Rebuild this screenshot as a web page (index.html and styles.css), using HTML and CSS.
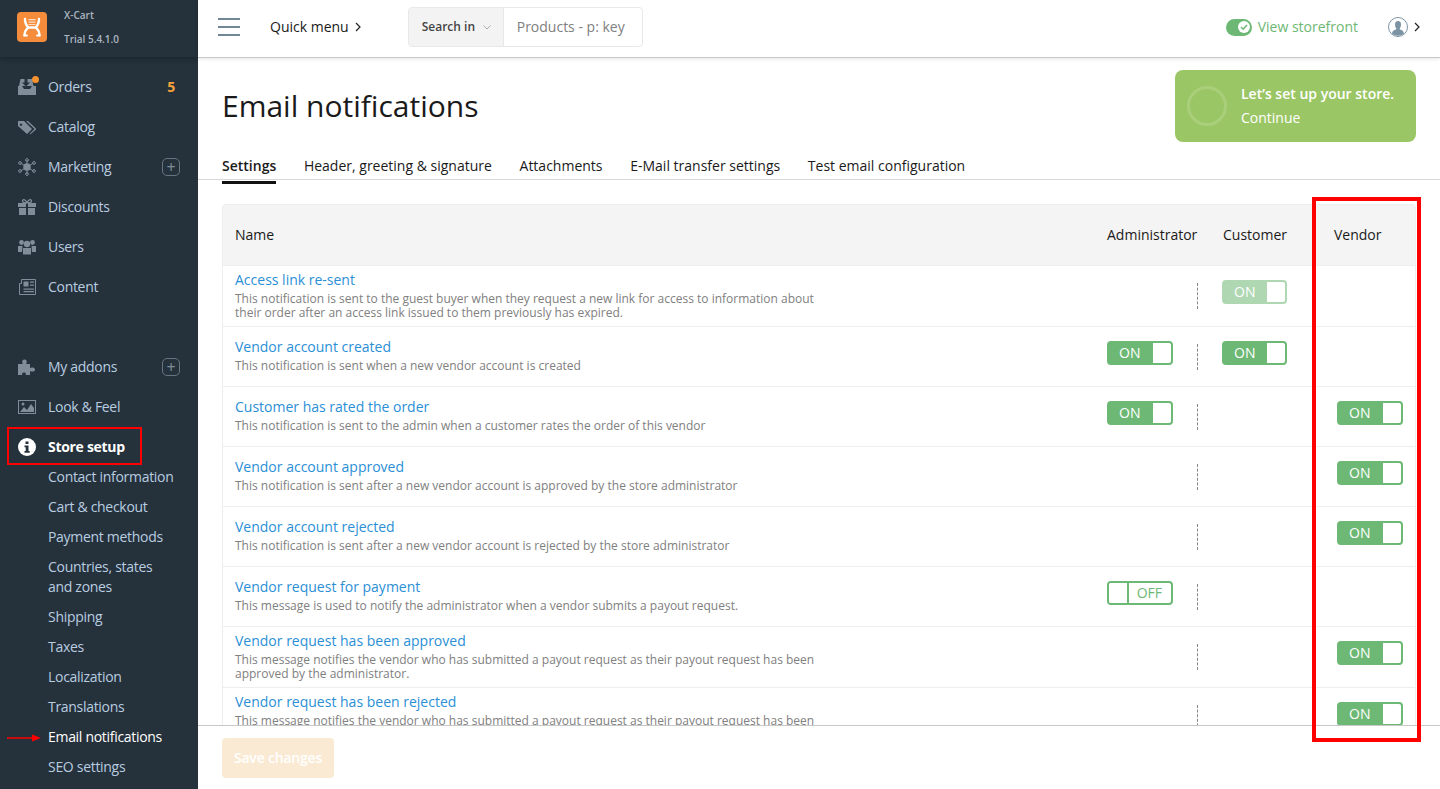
FILE: index.html
```html
<!DOCTYPE html>
<html lang="en">
<head>
<meta charset="utf-8">
<title>Email notifications</title>
<link rel="stylesheet" href="styles.css">
</head>
<body>
<div class="app">
  <aside class="sidebar">
    <div class="brand">
      <svg class="logo" viewBox="0 0 30 30"><rect width="30" height="30" rx="4" fill="#f58c3b"/><path d="M8 7c0 4 .5 6 3.500 8.500C8.500 18 8 19 7.500 23M22 7c0 4-.5 6-3.500 8.500 3 2.500 3.500 3.500 4 7.500M11 15.500h8" fill="none" stroke="#fff" stroke-width="2.400" stroke-linecap="round"/><path d="M7 23.500h3M20 23.500h3" stroke="#fff" stroke-width="1.800" stroke-linecap="round"/><path d="M11.500 7h7v1.300h-7zM11.500 9.500h7v1.300h-7zM11.500 12h7v1h-7z" fill="#fff" opacity=".7"/></svg>
      <div class="brand-text"><div>X-Cart</div><div>Trial 5.4.1.0</div></div>
    </div>
    <nav class="nav">
      <a class="item"><span class="ico"><svg viewBox="0 0 18 18"><path d="M2.500 1H14l1.500 7H18v9H0V8h1z" fill="#7f8e99"/><path d="M6.500 1h3v3.500h2.500L8 8.500 4 4.500h2.500zM4 8l2 3h6l2-3z" fill="#25313b"/></svg><i class="dot"></i></span>Orders<b class="count">5</b></a>
      <a class="item"><span class="ico"><svg viewBox="0 0 18 18"><path d="M0 3h6l8 8-5 5-9-8zM3 5.500a1.200 1.200 0 1 0 .01 0z" fill="#7f8e99" fill-rule="evenodd"/><path d="M8 3l8.500 8-5 5 1 .2 6-5.200L10 3z" fill="#7f8e99"/></svg></span>Catalog</a>
      <a class="item"><span class="ico"><svg viewBox="0 0 18 18"><g stroke="#7f8e99" fill="none"><path d="M9 9L2.500 5M9 9l6.500-4M9 9l-6.500 4M9 9l6.500 4M9 9V2M9 9v7"/><circle cx="9" cy="2" r="1.400"/><circle cx="9" cy="16" r="1.400"/><circle cx="2" cy="5" r="1.400"/><circle cx="16" cy="5" r="1.400"/><circle cx="2" cy="13" r="1.400"/><circle cx="16" cy="13" r="1.400"/></g><circle cx="9" cy="9" r="3.800" fill="#7f8e99"/></svg></span>Marketing<span class="plus">+</span></a>
      <a class="item"><span class="ico"><svg viewBox="0 0 18 18"><path d="M0 5h8v4H0zM10 5h8v4h-8zM1 10h7v7H1zM10 10h7v7h-7z" fill="#7f8e99"/><path d="M9 4.500C7 1 4.500 1 4.500 3S7 5 9 4.500C11 5 13.500 5 13.500 3S11 1 9 4.500z" fill="none" stroke="#7f8e99" stroke-width="1.300"/></svg></span>Discounts</a>
      <a class="item"><span class="ico"><svg viewBox="0 0 18 18"><g fill="#7f8e99"><circle cx="3.500" cy="4.500" r="2.400"/><circle cx="14.500" cy="4.500" r="2.400"/><circle cx="9" cy="6" r="3.200"/><path d="M0 8h4.500L4 14H0zM13.500 8H18v6h-4zM5 10h8v6.500H5z"/></g></svg></span>Users</a>
      <a class="item"><span class="ico"><svg viewBox="0 0 18 18"><path d="M3.500 1.500h14v15h-16V5.500h2z" fill="none" stroke="#7f8e99"/><path d="M5.500 3.500h5v5h-5zM12 3.500h4v1.300h-4zM12 6.500h4v1.300h-4zM5.500 10.500H16v1.300H5.500zM5.500 13H16v1.300H5.500z" fill="#7f8e99"/></svg></span>Content</a>
      <a class="item spaced"><span class="ico"><svg viewBox="0 0 18 18"><path d="M0 6h5C4 5 3.500 1.500 6.500 1.500S9 5 8 6h4v4c1-1 5-1 5 1.500S13.500 14 12 13v4H7.500c1-1 .5-2.500-1.500-2.500S3.500 16 4.500 17H0z" fill="#7f8e99"/></svg></span>My addons<span class="plus">+</span></a>
      <a class="item"><span class="ico"><svg viewBox="0 0 18 18"><rect x=".5" y="2.500" width="17" height="13" fill="none" stroke="#7f8e99"/><path d="M2 14l4-5 3 3 4-6 3 4v4z" fill="#7f8e99"/><circle cx="5" cy="6" r="1.500" fill="#7f8e99"/></svg></span>Look &amp; Feel</a>
      <a class="item current"><span class="ico"><svg viewBox="0 0 18 18"><circle cx="9" cy="9" r="9" fill="#fff"/><path d="M7.500 3.500h3v2.500h-3zM6.500 7.500h4V13h1.200v1.800H6.500V13h1.200V9.300H6.500z" fill="#25313b"/></svg></span>Store setup</a>
      <div class="sub">
        <a>Contact information</a>
        <a>Cart &amp; checkout</a>
        <a>Payment methods</a>
        <a class="wrap">Countries, states and zones</a>
        <a>Shipping</a>
        <a>Taxes</a>
        <a>Localization</a>
        <a>Translations</a>
        <a class="active">Email notifications</a>
        <a>SEO settings</a>
      </div>
    </nav>
  </aside>

  <div class="main">
    <header class="topbar">
      <div class="burger"><i></i><i></i><i></i></div>
      <div class="quick">Quick menu<svg class="chev" viewBox="0 0 6 10"><path d="M1 1l4 4-4 4" fill="none" stroke="#222" stroke-width="1.200"/></svg></div>
      <div class="search">
        <div class="search-in">Search in<svg viewBox="0 0 8 5"><path d="M.5.500L4 4 7.500.500" fill="none" stroke="#aaa"/></svg></div>
        <div class="search-ph">Products - p: key</div>
      </div>
      <div class="store">
        <span class="pill"><svg viewBox="0 0 12 12"><circle cx="6" cy="6" r="6" fill="#fff"/><path d="M3 6l2.200 2.200L9 4" fill="none" stroke="#6cb874" stroke-width="1.500"/></svg></span>
        View storefront
      </div>
      <div class="user">
        <svg class="avatar" viewBox="0 0 20 20"><circle cx="10" cy="10" r="9.500" fill="#fff" stroke="#7c93a3"/><path d="M10 4c2 0 3 1.500 3 3.500S12 11 11.500 12c1 1 4 1 4.500 4.500a9 9 0 0 1-12 0C4.500 13 7.500 13 8.500 12 8 11 7 9.500 7 7.500S8 4 10 4z" fill="#7c93a3"/></svg>
        <svg class="chev" viewBox="0 0 6 10"><path d="M1 1l4 4-4 4" fill="none" stroke="#222" stroke-width="1.200"/></svg>
      </div>
    </header>

    <div class="content">
      <div class="head">
        <h1>Email notifications</h1>
        <div class="setup">
          <span class="ring"></span>
          <div><b>Let’s set up your store.</b><div>Continue</div></div>
        </div>
      </div>
      <div class="tabs">
        <a class="tab on">Settings</a>
        <a class="tab">Header, greeting &amp; signature</a>
        <a class="tab">Attachments</a>
        <a class="tab">E-Mail transfer settings</a>
        <a class="tab">Test email configuration</a>
      </div>
      <div class="table">
        <div class="row thead">
          <div class="name">Name</div><div>Administrator</div><div class="th-cust">Customer</div><div class="th-vend">Vendor</div>
        </div>
        <div class="row tall">
          <div class="name"><a>Access link re-sent</a><p>This notification is sent to the guest buyer when they request a new link for access to information about their order after an access link issued to them previously has expired.</p></div>
          <div class="cell admin"></div>
          <div class="cell"><span class="toggle narrow dim">ON<i></i></span></div>
          <div class="cell vendor"></div>
        </div>
        <div class="row">
          <div class="name"><a>Vendor account created</a><p>This notification is sent when a new vendor account is created</p></div>
          <div class="cell admin"><span class="toggle">ON<i></i></span></div>
          <div class="cell"><span class="toggle narrow">ON<i></i></span></div>
          <div class="cell vendor"></div>
        </div>
        <div class="row">
          <div class="name"><a>Customer has rated the order</a><p>This notification is sent to the admin when a customer rates the order of this vendor</p></div>
          <div class="cell admin"><span class="toggle">ON<i></i></span></div>
          <div class="cell"></div>
          <div class="cell vendor"><span class="toggle">ON<i></i></span></div>
        </div>
        <div class="row">
          <div class="name"><a>Vendor account approved</a><p>This notification is sent after a new vendor account is approved by the store administrator</p></div>
          <div class="cell admin"></div>
          <div class="cell"></div>
          <div class="cell vendor"><span class="toggle">ON<i></i></span></div>
        </div>
        <div class="row">
          <div class="name"><a>Vendor account rejected</a><p>This notification is sent after a new vendor account is rejected by the store administrator</p></div>
          <div class="cell admin"></div>
          <div class="cell"></div>
          <div class="cell vendor"><span class="toggle">ON<i></i></span></div>
        </div>
        <div class="row">
          <div class="name"><a>Vendor request for payment</a><p>This message is used to notify the administrator when a vendor submits a payout request.</p></div>
          <div class="cell admin"><span class="toggle off"><i></i>OFF</span></div>
          <div class="cell"></div>
          <div class="cell vendor"></div>
        </div>
        <div class="row tall">
          <div class="name"><a>Vendor request has been approved</a><p>This message notifies the vendor who has submitted a payout request as their payout request has been approved by the administrator.</p></div>
          <div class="cell admin"></div>
          <div class="cell"></div>
          <div class="cell vendor"><span class="toggle">ON<i></i></span></div>
        </div>
        <div class="row tall">
          <div class="name"><a>Vendor request has been rejected</a><p>This message notifies the vendor who has submitted a payout request as their payout request has been rejected by the administrator.</p></div>
          <div class="cell admin"></div>
          <div class="cell"></div>
          <div class="cell vendor"><span class="toggle">ON<i></i></span></div>
        </div>
      </div>
    </div>

    <footer class="footer"><button class="save">Save changes</button></footer>
  </div>
</div>

<div class="mark mark-store"></div>
<div class="mark mark-vendor"></div>
<svg class="mark-arrow" viewBox="0 0 34 8"><path d="M0 4h27" stroke="#f00" stroke-width="1.500"/><path d="M25 .5l9 3.500-9 3.500z" fill="#f00"/></svg>
</body>
</html>
```

FILE: styles.css
```css
* { box-sizing: border-box; }
html, body { margin: 0; height: 100%; overflow: hidden; }
body { font: 14px/20px "Open Sans", "Noto Sans", sans-serif; color: #1a1a1a; background: #fff; }
a { text-decoration: none; }
.app { display: flex; height: 789px; }

.sidebar { width: 198px; flex: none; background: #25313b; color: #b9cde0; overflow: hidden; letter-spacing: -.3px; }
.brand { height: 57px; display: flex; align-items: flex-start; padding: 12px 0 0 17px; box-shadow: 0 2px 5px rgba(0,0,0,.25); background: #25313b; }
.logo { width: 30px; height: 30px; flex: none; }
.brand-text { margin: -9px 0 0 17px; font-size: 10px; font-weight: 600; line-height: 24px; color: #aab6c0; letter-spacing: 0; }
.nav { padding-top: 10px; }
.item { display: flex; align-items: center; height: 40px; padding-left: 18px; position: relative; color: #b9cde0; }
.ico { width: 18px; height: 18px; margin-right: 12px; position: relative; flex: none; }
.ico svg { display: block; width: 18px; height: 18px; }
.dot { position: absolute; width: 7px; height: 7px; border-radius: 50%; background: #f5922f; top: -2px; right: -3px; }
.count { margin-left: auto; margin-right: 23px; color: #f5a33a; font-weight: 700; }
.plus { margin-left: auto; margin-right: 18px; width: 18px; height: 18px; border: 1px solid #66757f; border-radius: 5px; color: #7f8e99; display: flex; align-items: center; justify-content: center; font-size: 16px; line-height: 1; }
.spaced { margin-top: 40px; }
.current { color: #fff; font-weight: 700; }
.sub { margin-top: -5px; }
.sub a { display: block; padding: 5px 20px 5px 48px; color: #b9cde0; }
.sub .active { color: #fff; }

.main { flex: 1; min-width: 0; display: flex; flex-direction: column; }
.topbar { height: 58px; flex: none; display: flex; align-items: center; padding: 0 20px 3px; border-bottom: 1px solid #c8c8c8; box-shadow: 0 1px 4px rgba(0,0,0,.1); position: relative; z-index: 1; background: #fff; }
.burger { width: 22px; display: flex; flex-direction: column; gap: 6px; }
.burger i { display: block; height: 2px; background: #6f8796; }
.quick { margin-left: 30px; display: flex; align-items: center; }
.chev { width: 6px; height: 10px; margin-left: 6px; }
.search { margin-left: 47px; width: 235px; height: 40px; display: flex; border: 1px solid #e8e8e8; border-radius: 4px; overflow: hidden; }
.search-in { width: 95px; background: #f3f3f3; border-right: 1px solid #e8e8e8; font-size: 12px; font-weight: 600; color: #444; display: flex; align-items: center; padding-left: 13px; }
.search-in svg { width: 8px; height: 5px; margin-left: 8px; }
.search-ph { padding-left: 13px; line-height: 38px; color: #808080; }
.store { margin-left: auto; display: flex; align-items: center; color: #6cb874; }
.pill { width: 26px; height: 17px; border-radius: 9px; background: #6cb874; margin-right: 6px; display: flex; align-items: center; justify-content: flex-end; padding-right: 2px; }
.pill svg { width: 12px; height: 12px; }
.user { margin-left: 30px; display: flex; align-items: center; }
.avatar { width: 20px; height: 20px; }

.content { flex: 1; min-height: 0; overflow: hidden; }
.head { display: flex; justify-content: space-between; padding: 12px 24px 0; height: 94px; }
h1 { margin: 15px 0 0 0; font-size: 30px; font-weight: 400; line-height: 42px; color: #1a1a1a; }
.setup { width: 241px; height: 72px; background: #9bc666; border-radius: 8px; color: #fff; display: flex; align-items: center; padding-left: 12px; line-height: 24px; }
.setup b { font-weight: 600; }
.ring { width: 40px; height: 40px; border: 3px solid #a9cf7a; border-radius: 50%; margin-right: 14px; flex: none; }
.tabs { display: flex; gap: 27.7px; padding: 4px 24px 0; height: 28px; border-bottom: 1px solid #d8d8d8; }
.tab { color: #1a1a1a; height: 28px; }
.tab.on { font-weight: 600; border-bottom: 3px solid #111; }
.table { margin: 24px 24px 0; border: 1px solid #eee; border-bottom: 0; border-radius: 4px 4px 0 0; }
.row { display: grid; grid-template-columns: 884px 115px 111px 82px; height: 60px; border-bottom: 1px solid #eee; align-items: center; }
.row.tall { height: 61px; }
.row.thead { height: 61px; background: #f4f4f4; }
.th-cust { padding-left: 1px; }
.th-vend { padding-left: 1px; }
.name { padding: 0 0 3px 12px; }
.thead .name { padding-bottom: 0; }
.name a { display: block; color: #2a8fd6; }
.name p { margin: 2px 0 0; font-size: 12px; line-height: 14px; color: #808080; max-width: 600px; }
.cell { height: 100%; display: flex; align-items: center; padding-bottom: 7px; position: relative; }
.tall .cell { padding-bottom: 8px; }
.admin::after { content: ""; position: absolute; right: 24px; top: 50%; height: 26px; margin-top: -13px; border-left: 1px dashed #888; }
.vendor { padding-left: 4px; }
.toggle { width: 66px; height: 24px; border: 2px solid #6cb874; border-radius: 4px; background: #6cb874; color: #fff; display: flex; align-items: center; justify-content: space-between; padding-left: 10px; line-height: 20px; }
.toggle.narrow { width: 65px; }
.toggle i { width: 18px; height: 20px; background: #fff; border-radius: 0 2px 2px 0; }
.toggle.dim { opacity: .55; }
.toggle.off { background: #fff; color: #6cb874; padding-left: 0; padding-right: 9px; }
.toggle.off i { width: 20px; border-right: 2px solid #6cb874; border-radius: 2px 0 0 2px; }

.footer { height: 64px; flex: none; border-top: 1px solid #c8c8c8; padding: 12px 24px; background: #fff; }
.save { width: 112px; height: 40px; border: 0; border-radius: 4px; background: #fbead3; color: #fff; font: 600 14px/40px "Open Sans", sans-serif; letter-spacing: -.2px; padding: 0; }

.mark { position: absolute; border-style: solid; border-color: #f00; }
.mark-store { left: 7px; top: 427px; width: 135px; height: 38px; border-width: 2px; }
.mark-vendor { left: 1312px; top: 197px; width: 109px; height: 545px; border-width: 4px; }
.mark-arrow { position: absolute; left: 7px; top: 734px; width: 34px; height: 8px; }
```
